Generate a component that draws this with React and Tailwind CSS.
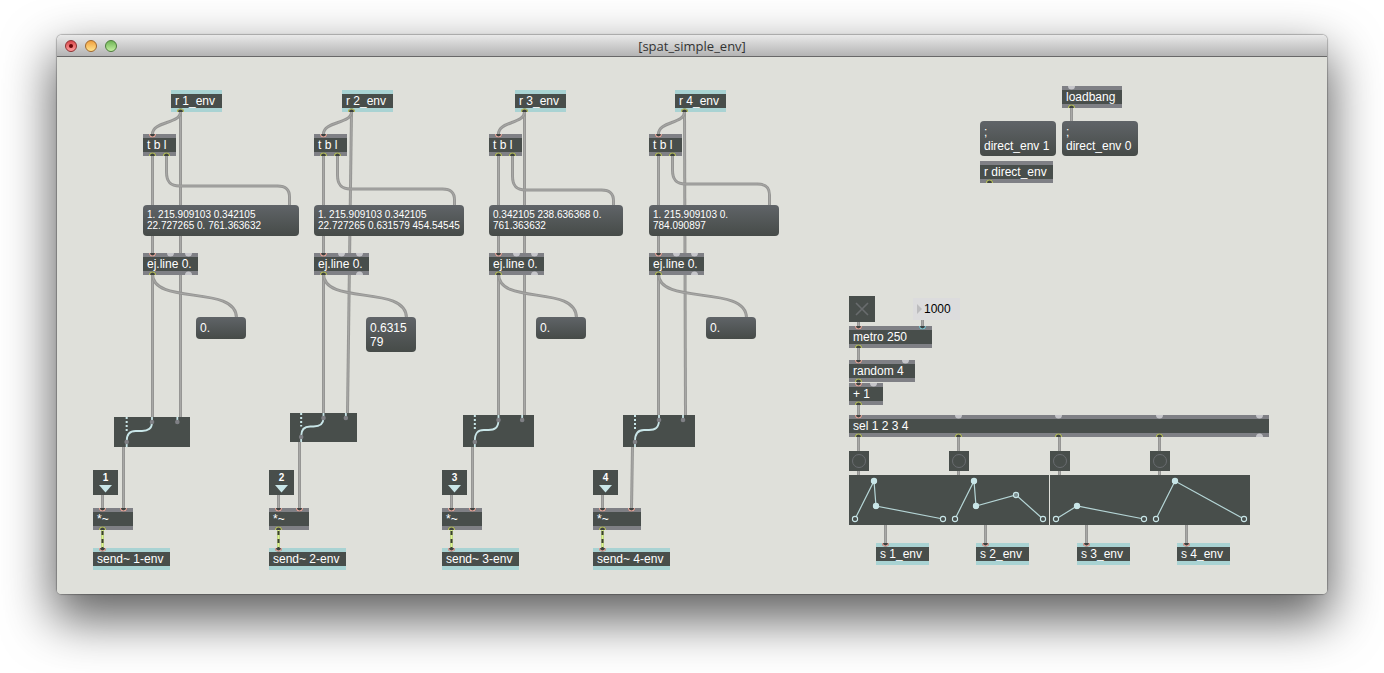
import { useState } from 'react';

const lanes = [
  {
    n: 1,
    x: 86,
    receiveX: 114,
    list: '1. 215.909103 0.342105 22.727265 0. 761.363632',
    listW: 156,
    bendY: 129,
    value: '0.',
    valueX: 139,
    valueH: 22,
    gate: { x: 57, y: 360, w: 76, h: 30 },
    timeX: 123,
    mulX: 36,
    mulW: 40,
    gateOutX: 66,
  },
  {
    n: 2,
    x: 257,
    receiveX: 285,
    list: '1. 215.909103 0.342105 22.727265 0.631579 454.54545',
    listW: 150,
    bendY: 132,
    value: '0.631579',
    valueX: 309,
    valueH: 35,
    gate: { x: 233, y: 356, w: 67, h: 29 },
    timeX: 290,
    mulX: 212,
    mulW: 40,
    gateOutX: 242,
  },
  {
    n: 3,
    x: 432,
    receiveX: 458,
    list: '0.342105 238.636368 0. 761.363632',
    listW: 134,
    bendY: 133,
    value: '0.',
    valueX: 479,
    valueH: 22,
    gate: { x: 406, y: 358, w: 71, h: 32 },
    timeX: 467,
    mulX: 385,
    mulW: 40,
    gateOutX: 415,
  },
  {
    n: 4,
    x: 592,
    receiveX: 618,
    list: '1. 215.909103 0. 784.090897',
    listW: 130,
    bendY: 127,
    value: '0.',
    valueX: 649,
    valueH: 22,
    gate: { x: 566, y: 358, w: 72, h: 32 },
    timeX: 628,
    mulX: 536,
    mulW: 48,
    gateOutX: 575,
  },
];

const envelopes = [
  { n: 1, x: 792, sendX: 819, points: [[6, 44], [25, 6], [27, 31], [94, 44]] },
  { n: 2, x: 892, sendX: 919, points: [[6, 44], [25, 6], [27, 31], [67, 20], [94, 44]], hover: 3 },
  { n: 3, x: 993, sendX: 1020, points: [[6, 44], [27, 31], [94, 44]] },
  { n: 4, x: 1093, sendX: 1120, points: [[6, 44], [25, 6], [94, 44]] },
];

const portColors = {
  hot: '#e3a59a',
  int: '#7fc4cf',
  out: '#bcc460',
};

function place(x, y, w, h) {
  return { left: x, top: y, width: w, height: h };
}

// Half round connection point on the edge of an object
function Port({ x, kind, bottom }) {
  const arc = bottom ? 'M0.5 4A3.5 3.5 0 0 1 7.5 4' : 'M0.5 0A3.5 3.5 0 0 0 7.5 0';
  const ring = bottom ? 'M1 4A3 3 0 0 1 7 4' : 'M1 0A3 3 0 0 0 7 0';
  return (
    <svg
      className={`absolute h-1 w-[9px] ${bottom ? 'bottom-0' : 'top-0'}`}
      style={{ left: x - 4 }}
      viewBox="-0.5 0 9 4"
    >
      {kind === 'cold' ? (
        <path d={arc} fill="#c6c6ca" />
      ) : (
        <>
          <path d={arc} fill="#3d4241" />
          <path d={ring} fill="none" stroke={portColors[kind]} strokeWidth="1.1" />
        </>
      )}
    </svg>
  );
}

// Max object box with inlets on top and outlets below
function Obj({ x, y, w, text, ins = [], outs = [], teal }) {
  return (
    <div
      className={`absolute border-y-4 ${teal ? 'border-[#a9d3d3]' : 'border-[#7f8085]'} bg-[#484e4b]`}
      style={{ left: x, top: y, width: w }}
    >
      <div className="px-1 text-xs leading-[14px] whitespace-nowrap text-white">{text}</div>
      <div className="absolute inset-x-0 -inset-y-1">
        {ins.map(([px, kind]) => (
          <Port key={px} x={px} kind={kind} />
        ))}
        {outs.map(([px, kind]) => (
          <Port key={px} x={px} kind={kind} bottom />
        ))}
      </div>
    </div>
  );
}

function Message({ x, y, w, h, text, small }) {
  return (
    <button
      type="button"
      className={`absolute flex items-start rounded-[4px] bg-linear-to-b from-[#606468] to-[#464b48] px-1 pt-1 text-left break-all text-white ${
        small ? 'text-[10px] leading-[11px]' : 'text-xs leading-[14px]'
      }`}
      style={place(x, y, w, h)}
    >
      <span className={small ? 'wrap-normal break-normal' : 'whitespace-pre-line'}>{text}</span>
    </button>
  );
}

function Gate({ x, y, w, h }) {
  const left = w / 6;
  const mid = w / 2;
  const right = (w * 5) / 6;
  const cy = h / 2 - 1;
  return (
    <svg className="absolute bg-[#484e4b]" style={place(x, y, w, h)} viewBox={`0 0 ${w} ${h}`}>
      <path d={`M${left} 0V${cy}`} stroke="#c9e6e8" strokeWidth="2" strokeDasharray="2 2" />
      <path
        d={`M${mid} 0V5C${mid} ${cy - 2} ${mid - 4} ${cy} ${mid - 10} ${cy}H${left + 9}C${left + 3} ${cy} ${left} ${cy + 3} ${left} ${h - 6}V${h}`}
        fill="none"
        stroke="#c9e6e8"
        strokeWidth="1.8"
      />
      <path d={`M${right} 0V5`} stroke="#c9e6e8" strokeWidth="1.8" />
      <circle cx={mid} cy="5" r="2.3" fill="#7f8085" />
      <circle cx={right} cy="5" r="2.3" fill="#7f8085" />
      <circle cx={left} cy={h - 5} r="2.3" fill="#7f8085" />
    </svg>
  );
}

function Inlet({ x, y, n }) {
  return (
    <div className="absolute flex h-[25px] w-[25px] flex-col items-center bg-[#484e4b] pt-[2px]" style={{ left: x, top: y }}>
      <span className="text-[10px] leading-3 font-bold text-white">{n}</span>
      <svg className="h-[9px] w-[13px] shrink-0" viewBox="0 0 13 9">
        <path d="M0 1H13L6.5 8.5Z" fill="#c9e6e8" />
      </svg>
    </div>
  );
}

function Envelope({ x, y, points, hover }) {
  return (
    <svg className="absolute bg-[#484e4b]" style={place(x, y, 100, 50)} viewBox="0 0 100 50">
      <polyline points={points.join(' ')} fill="none" stroke="#b5d5d6" strokeWidth="1.2" />
      {points.map(([px, py], i) => {
        const end = i === 0 || i === points.length - 1;
        return (
          <circle
            key={i}
            cx={px}
            cy={py}
            r="2.6"
            fill={end ? '#484e4b' : i === hover ? '#7b8c8e' : '#c9e6e8'}
            stroke="#c9e6e8"
            strokeWidth="1.1"
          />
        );
      })}
    </svg>
  );
}

function Cable({ d }) {
  return (
    <>
      <path d={d} stroke="#969694" strokeWidth="3" />
      <path d={d} stroke="#a8a8a6" strokeWidth="1" />
    </>
  );
}

function Cables() {
  const paths = [];
  lanes.forEach((l) => {
    const from = l.receiveX + 9;
    const inX = l.x + 9;
    const outX = l.x + 23;
    const endX = l.x + l.listW - 10;
    const valX = l.valueX + 40;
    const b = l.bendY;
    paths.push(
      `M${from} 54L${l.timeX} ${l.gate.y}`,
      `M${from} 55C${from} 67 ${inX} 64 ${inX} 77`,
      `M${inX} 98V197`,
      `M${outX} 98V${b - 14}C${outX} ${b - 4} ${outX + 4} ${b} ${outX + 13} ${b}H${endX - 12}C${endX - 4} ${b} ${endX} ${b + 3} ${endX} ${b + 11}V149`,
      `M${inX} 217V${l.gate.y}`,
      `M${inX} 217C${inX} 249 ${valX} 227 ${valX} 261`,
      `M${l.gateOutX} ${l.gate.y + l.gate.h}L${l.mulX + l.mulW - 10} 452`,
      `M${l.mulX + 9} 438V452`
    );
  });
  envelopes.forEach((e) => {
    paths.push(`M${e.x + 9} 379V419`, `M${e.sendX + 9} 468V487`);
  });
  paths.push('M1014 50V65', 'M801 264V270', 'M865 263V270', 'M801 290V304', 'M801 324V327', 'M801 347V359');

  return (
    <svg className="pointer-events-none absolute inset-0 h-full w-full">
      <g transform="translate(0.5 0)" fill="none">
        {paths.map((d) => (
          <Cable key={d} d={d} />
        ))}
        {/* signal cords */}
        {lanes.map((l) => (
          <g key={l.n}>
            <path d={`M${l.mulX + 9} 473V491`} stroke="#a9b183" strokeWidth="3" />
            <path d={`M${l.mulX + 9} 473V491`} stroke="#d9f58a" strokeWidth="2" />
            <path d={`M${l.mulX + 9} 474V491`} stroke="#3a4030" strokeWidth="2" strokeDasharray="4 4" />
          </g>
        ))}
      </g>
    </svg>
  );
}

function TitleBar() {
  return (
    <header className="relative flex h-[22px] shrink-0 items-center rounded-t-[5px] border-b border-[#686868] bg-linear-to-b from-[#e9e9e9] to-[#b4b4b4] px-2">
      <div className="flex gap-2">
        <button
          type="button"
          aria-label="Close"
          className="flex h-3 w-3 items-center justify-center rounded-full border border-[#8e2f2f] bg-linear-to-b from-[#d8474c] to-[#ff9c9c]"
        >
          <span className="h-1 w-1 rounded-full bg-[#6b0508]" />
        </button>
        <button
          type="button"
          aria-label="Minimize"
          className="h-3 w-3 rounded-full border border-[#a0672b] bg-linear-to-b from-[#f0a03c] to-[#ffe48c]"
        />
        <button
          type="button"
          aria-label="Zoom"
          className="h-3 w-3 rounded-full border border-[#4c7c3a] bg-linear-to-b from-[#6fb455] to-[#c4f0a2]"
        />
      </div>
      <h1 className="pointer-events-none absolute inset-x-0 text-center font-['Open_Sans',sans-serif] text-[13px] leading-5 font-medium text-[#333333]">
        [spat_simple_env]
      </h1>
    </header>
  );
}

export default function App() {
  const [running, setRunning] = useState(false);
  const [interval, setIntervalMs] = useState('1000');

  return (
    <div className="flex min-h-screen flex-col bg-white px-[57px] pt-[35px] pb-[79px] font-['Liberation_Sans',Arial,sans-serif]">
      <main className="flex grow flex-col rounded-[5px] shadow-[0_0_1px_1px_rgba(0,0,0,0.25),0_22px_50px_4px_rgba(0,0,0,0.62)]">
        <TitleBar />
        <div className="relative grow overflow-hidden rounded-b-[4px] bg-[#dfe0da]">
          <Cables />

          {lanes.map((l) => (
            <section key={l.n} aria-label={`Envelope ${l.n}`}>
              <Obj x={l.receiveX} y={33} w={51} text={`r ${l.n}_env`} outs={[[9, 'out']]} teal />
              <Obj x={l.x} y={77} w={33} text="t b l" ins={[[9, 'hot']]} outs={[[9, 'out'], [23, 'out']]} />
              <Message x={l.x} y={148} w={l.listW} h={31} text={l.list} small />
              <Obj
                x={l.x}
                y={196}
                w={55}
                text="ej.line 0."
                ins={[[9, 'hot'], [27, 'cold'], [45, 'cold']]}
                outs={[[9, 'out'], [45, 'cold']]}
              />
              <Message x={l.valueX} y={260} w={50} h={l.valueH} text={l.value} />
              <Gate {...l.gate} />
              <Inlet x={l.mulX} y={413} n={l.n} />
              <Obj
                x={l.mulX}
                y={451}
                w={l.mulW}
                text="*~"
                ins={[[9, 'hot'], [l.mulW - 10, 'hot']]}
                outs={[[9, 'out']]}
              />
              <Obj x={l.mulX} y={491} w={77} text={`send~ ${l.n}-env`} ins={[[9, 'hot']]} teal />
            </section>
          ))}

          <Obj x={1005} y={29} w={60} text="loadbang" ins={[[9, 'cold']]} outs={[[9, 'out']]} />
          <Message x={923} y={64} w={76} h={35} text={';\ndirect_env 1'} />
          <Message x={1005} y={64} w={76} h={35} text={';\ndirect_env 0'} />
          <Obj x={923} y={104} w={73} text="r direct_env" outs={[[9, 'out']]} />

          <label className="absolute h-[26px] w-[26px] bg-[#484e4b]" style={{ left: 792, top: 239 }}>
            <input
              type="checkbox"
              aria-label="Metro on"
              className="absolute inset-0 appearance-none"
              checked={running}
              onChange={(e) => setRunning(e.target.checked)}
            />
            <svg className="h-full w-full" viewBox="0 0 26 26">
              <path d="M7 7L19 19M19 7L7 19" stroke={running ? '#c9e6e8' : '#696c6e'} strokeWidth="1.6" />
            </svg>
          </label>

          <div className="absolute flex h-[22px] w-[47px] items-center bg-[#dcdcdd] pl-1" style={{ left: 856, top: 241 }}>
            <svg className="h-[10px] w-[5px] shrink-0" viewBox="0 0 5 10">
              <path d="M0 0L5 5L0 10Z" fill="#bcbcbe" />
            </svg>
            <input
              type="text"
              aria-label="Interval"
              className="w-full min-w-0 bg-transparent pl-0.5 text-xs leading-[14px] text-black outline-none"
              value={interval}
              onChange={(e) => setIntervalMs(e.target.value)}
            />
          </div>

          <Obj x={792} y={269} w={83} text="metro 250" ins={[[9, 'hot'], [73, 'int']]} outs={[[9, 'out']]} />
          <Obj x={792} y={303} w={66} text="random 4" ins={[[9, 'hot'], [56, 'cold']]} outs={[[9, 'out']]} />
          <Obj x={792} y={326} w={34} text="+ 1" ins={[[9, 'hot'], [24, 'cold']]} outs={[[9, 'out']]} />
          <Obj
            x={792}
            y={358}
            w={420}
            text="sel 1 2 3 4"
            ins={[[9, 'hot'], [109, 'cold'], [209, 'cold'], [310, 'cold'], [410, 'cold']]}
            outs={[[9, 'out'], [109, 'out'], [209, 'out'], [310, 'out'], [410, 'cold']]}
          />

          {envelopes.map((e) => (
            <section key={e.n} aria-label={`Breakpoints ${e.n}`}>
              <button
                type="button"
                aria-label={`Bang ${e.n}`}
                className="absolute flex h-5 w-5 items-center justify-center bg-[#484e4b]"
                style={{ left: e.x, top: 394 }}
              >
                <span className="h-[14px] w-[14px] rounded-full border border-[#696c70]" />
              </button>
              <Envelope x={e.x} y={418} points={e.points} hover={e.hover} />
              <Obj x={e.sendX} y={486} w={53} text={`s ${e.n}_env`} ins={[[9, 'hot']]} teal />
            </section>
          ))}
        </div>
      </main>
    </div>
  );
}
